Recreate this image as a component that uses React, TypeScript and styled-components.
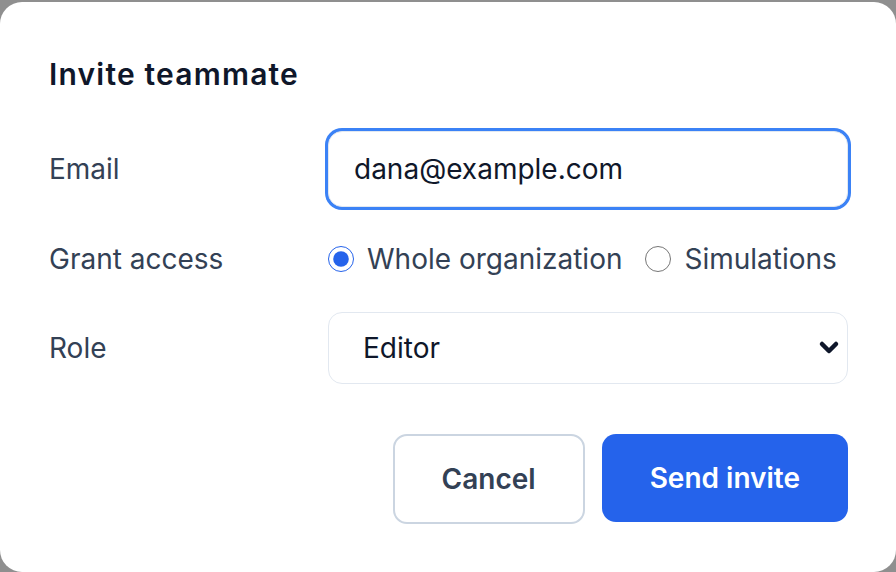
import React, { useState } from 'react';
import styled, { createGlobalStyle } from 'styled-components';

const GlobalStyle = createGlobalStyle`
  html, body {
    margin: 0;
    padding: 0;
    background: #8f8f8f;
    font-family: Inter, "Noto Sans", sans-serif;
  }
  * {
    box-sizing: border-box;
  }
`;

const Page = styled.div`
  width: 896px;
  height: 572px;
  padding-top: 2px;
  overflow: hidden;
`;

const Dialog = styled.div`
  width: 896px;
  height: 570px;
  background: #fff;
  border-radius: 22px;
  padding: 55px 48px 0 49px;
`;

const Title = styled.h2`
  margin: 0 0 40px;
  font-size: 30px;
  line-height: 34px;
  font-weight: 600;
  letter-spacing: 1.2px;
  color: #0f172a;
`;

const Form = styled.div`
  display: grid;
  grid-template-columns: 279px 1fr;
  row-gap: 35px;
  align-items: center;
`;

const Label = styled.label`
  font-size: 28px;
  line-height: 34px;
  color: #334155;
`;

const EmailInput = styled.input`
  height: 76px;
  width: 100%;
  padding: 0 25px;
  font: inherit;
  font-size: 28px;
  color: #0f172a;
  border: 1.5px solid #e2e8f0;
  border-radius: 14px;
  outline: none;
  box-shadow: 0 0 0 3px #3b82f6;
`;

const RadioGroup = styled.div`
  display: flex;
  align-items: center;
  gap: 23px;
`;

const RadioOption = styled.label`
  display: flex;
  align-items: center;
  gap: 13px;
  font-size: 28px;
  line-height: 34px;
  color: #334155;
  cursor: pointer;
`;

const Radio = styled.input`
  width: 26px;
  height: 26px;
  margin: 0;
  accent-color: #2563eb;
`;

const SelectWrap = styled.div`
  position: relative;
  margin-top: 1px;
`;

const Select = styled.select`
  appearance: none;
  width: 100%;
  height: 72px;
  padding: 0 34px;
  font: inherit;
  font-size: 28px;
  color: #0f172a;
  background: #fff;
  border: 1.5px solid #e2e8f0;
  border-radius: 14px;
  outline: none;
`;

const Chevron = styled.svg`
  position: absolute;
  right: 8px;
  top: 50%;
  transform: translateY(-50%);
  pointer-events: none;
`;

const Actions = styled.div`
  display: flex;
  justify-content: flex-end;
  gap: 17px;
  margin-top: 50px;
`;

const Button = styled.button<{ $primary?: boolean }>`
  height: ${(p) => (p.$primary ? '88px' : '90px')};
  padding: 0 ${(p) => (p.$primary ? '48px' : '47px')};
  font: inherit;
  font-size: 28px;
  font-weight: 600;
  border-radius: 14px;
  cursor: pointer;
  color: ${(p) => (p.$primary ? '#fff' : '#334155')};
  background: ${(p) => (p.$primary ? '#2563eb' : '#fff')};
  border: ${(p) => (p.$primary ? 'none' : '2px solid #cbd5e1')};
`;

export default function App() {
  const [email, setEmail] = useState('dana@example.com');
  const [access, setAccess] = useState('org');

  return (
    <>
      <GlobalStyle />
      <Page>
        <Dialog>
          <Title>Invite teammate</Title>
          <Form>
            <Label htmlFor="email">Email</Label>
            <EmailInput id="email" value={email} onChange={(e) => setEmail(e.target.value)} />

            <Label>Grant access</Label>
            <RadioGroup>
              <RadioOption>
                <Radio type="radio" name="access" checked={access === 'org'} onChange={() => setAccess('org')} />
                Whole organization
              </RadioOption>
              <RadioOption>
                <Radio type="radio" name="access" checked={access === 'sim'} onChange={() => setAccess('sim')} />
                Simulations
              </RadioOption>
            </RadioGroup>

            <Label htmlFor="role">Role</Label>
            <SelectWrap>
              <Select id="role" defaultValue="editor">
                <option value="viewer">Viewer</option>
                <option value="editor">Editor</option>
                <option value="admin">Admin</option>
              </Select>
              <Chevron width="22" height="16" viewBox="0 0 22 16">
                <path d="M4 4 L11 11 L18 4" fill="none" stroke="#0f172a" strokeWidth="4.5" strokeLinecap="round" strokeLinejoin="round" />
              </Chevron>
            </SelectWrap>
          </Form>
          <Actions>
            <Button>Cancel</Button>
            <Button $primary>Send invite</Button>
          </Actions>
        </Dialog>
      </Page>
    </>
  );
}
